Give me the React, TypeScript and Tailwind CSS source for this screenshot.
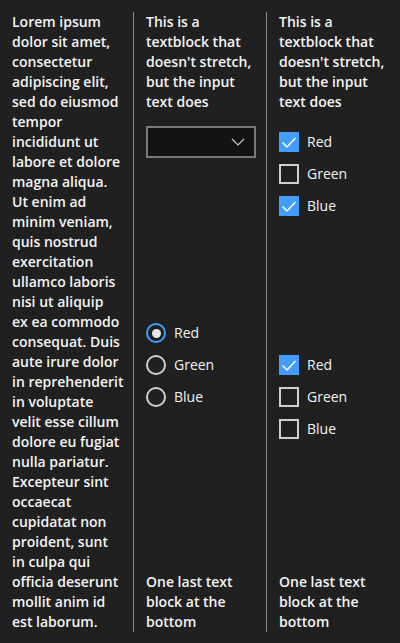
import React from "react";

const font = { fontFamily: '"Open Sans", "Noto Sans", sans-serif' };

function Lines({ lines }: { lines: string[] }) {
  return (
    <div className="font-semibold text-[14px] leading-[20px] text-[#f4f4f4]">
      {lines.map((l, i) => (
        <div key={i} className="whitespace-nowrap">
          {l}
        </div>
      ))}
    </div>
  );
}

function CheckBox({ label, checked }: { label: string; checked?: boolean }) {
  return (
    <div className="flex h-8 items-center gap-2">
      {checked ? (
        <div className="flex h-5 w-5 items-center justify-center bg-[#439dff]">
          <svg width="20" height="20" viewBox="0 0 20 20">
            <path d="M3.5 10.5 L8 15 L16.5 6" fill="none" stroke="#ffffff" strokeWidth="1.4" />
          </svg>
        </div>
      ) : (
        <div className="h-5 w-5 border-2 border-[#cfcfcf]" />
      )}
      <span className="text-[14px] leading-[20px] text-[#f4f4f4]">{label}</span>
    </div>
  );
}

function Radio({ label, checked }: { label: string; checked?: boolean }) {
  return (
    <div className="flex h-8 items-center gap-2">
      {checked ? (
        <div className="flex h-5 w-5 items-center justify-center rounded-full border-2 border-[#439dff]">
          <div className="h-[9px] w-[9px] rounded-full bg-[#e6e6e6]" />
        </div>
      ) : (
        <div className="h-5 w-5 rounded-full border-2 border-[#cfcfcf]" />
      )}
      <span className="text-[14px] leading-[20px] text-[#f4f4f4]">{label}</span>
    </div>
  );
}

const header = ["This is a", "textblock that", "doesn't stretch,", "but the input", "text does"];
const footer = ["One last text", "block at the", "bottom"];
const lorem = [
  "Lorem ipsum",
  "dolor sit amet,",
  "consectetur",
  "adipiscing elit,",
  "sed do eiusmod",
  "tempor",
  "incididunt ut",
  "labore et dolore",
  "magna aliqua.",
  "Ut enim ad",
  "minim veniam,",
  "quis nostrud",
  "exercitation",
  "ullamco laboris",
  "nisi ut aliquip",
  "ex ea commodo",
  "consequat. Duis",
  "aute irure dolor",
  "in reprehenderit",
  "in voluptate",
  "velit esse cillum",
  "dolore eu fugiat",
  "nulla pariatur.",
  "Excepteur sint",
  "occaecat",
  "cupidatat non",
  "proident, sunt",
  "in culpa qui",
  "officia deserunt",
  "mollit anim id",
  "est laborum.",
];

export default function App() {
  return (
    <div style={font} className="h-[643px] w-[400px] overflow-hidden bg-[#202020] py-3">
      <div className="grid h-[619px] grid-cols-[133px_133px_134px]">
        <div className="pl-3">
          <Lines lines={lorem} />
        </div>
        <div className="flex flex-col border-l border-[#8a8a8a] pl-3">
          <Lines lines={header} />
          <div className="mt-[14px] flex h-8 w-[110px] items-center justify-end border-2 border-[#7a7a7a] bg-[#131313] pr-[9px]">
            <svg width="14" height="8" viewBox="0 0 14 8">
              <path d="M1 1 L7 7 L13 1" fill="none" stroke="#c8c8c8" strokeWidth="1.2" />
            </svg>
          </div>
          <div className="flex flex-1 flex-col justify-center">
            <Radio label="Red" checked />
            <Radio label="Green" />
            <Radio label="Blue" />
          </div>
          <Lines lines={footer} />
        </div>
        <div className="flex flex-col border-l border-[#8a8a8a] pl-3">
          <Lines lines={header} />
          <div className="mt-[14px] flex flex-col">
            <CheckBox label="Red" checked />
            <CheckBox label="Green" />
            <CheckBox label="Blue" checked />
          </div>
          <div className="flex flex-1 flex-col justify-center">
            <CheckBox label="Red" checked />
            <CheckBox label="Green" />
            <CheckBox label="Blue" />
          </div>
          <Lines lines={footer} />
        </div>
      </div>
    </div>
  );
}
